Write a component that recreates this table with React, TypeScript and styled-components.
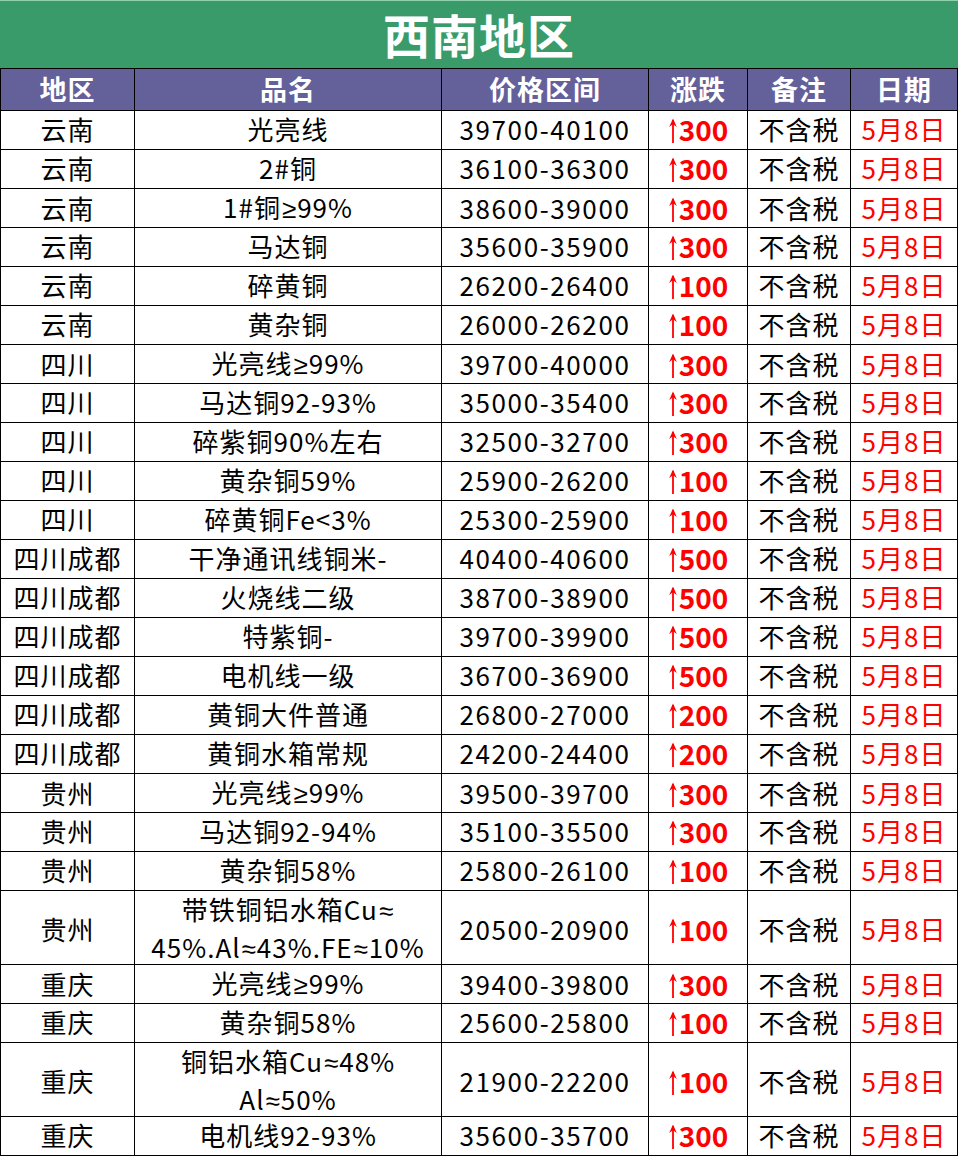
import React from "react";
import styled, { createGlobalStyle } from "styled-components";

const Global = createGlobalStyle`
  html, body { margin: 0; padding: 0; background: #ffffff; }
  body { font-family: "Noto Sans CJK SC", "Noto Sans", sans-serif; }
`;

const COLS = "135px 307px 207px 99px 103px 107px";

const Sheet = styled.div`
  width: 958px;
  display: flex;
  flex-direction: column;
`;

const Title = styled.div`
  background: #399b69;
  border-top: 1px solid #8fd0ad;
  box-sizing: border-box;
  border-bottom: 1px solid #000;
  height: 69px;
  padding-bottom: 2px;
  display: flex;
  align-items: center;
  justify-content: center;
  color: #ffffff;
  font-weight: 700;
  font-size: 47px;
  letter-spacing: 1px;
`;

const Row = styled.div<{ $h: number }>`
  display: grid;
  grid-template-columns: ${COLS};
  height: ${(p) => p.$h + 1}px;
  box-sizing: border-box;
  border-bottom: 1px solid #000;
`;

const HeadCell = styled.div`
  background: #63609a;
  color: #ffffff;
  font-weight: 700;
  font-size: 27px;
  letter-spacing: 1px;
  padding-bottom: 2px;
  display: flex;
  align-items: center;
  justify-content: center;
  border-right: 1px solid #000;
  box-sizing: border-box;
  &:first-child { border-left: 1px solid #000; }
`;

const Cell = styled.div<{ $color?: string; $spacing?: number }>`
  color: ${(p) => p.$color || "#000"};
  font-size: 26px;
  line-height: 36px;
  letter-spacing: ${(p) => (p.$spacing ?? 1)}px;
  padding-bottom: 2px;
  display: flex;
  align-items: center;
  justify-content: center;
  text-align: center;
  border-right: 1px solid #000;
  box-sizing: border-box;
  &:first-child { border-left: 1px solid #000; }
`;

const Text = styled.span`
  display: block;
  white-space: pre-line;
`;

const Sym = styled.span`
  font-family: "Liberation Sans", "DejaVu Sans", sans-serif;
  letter-spacing: 0;
  margin: 0 1px;
`;

const Change = styled.span`
  display: inline-flex;
  align-items: center;
  color: #ff0000;
  font-weight: 700;
  font-size: 28px;
  line-height: 1;
  letter-spacing: 0;
`;

const Arrow = styled.svg`
  width: 10px;
  height: 25px;
  margin-right: 1px;
  margin-top: 2px;
`;

const UpArrow = () => (
  <Arrow viewBox="0 0 10 25">
    <path d="M5 2 V25" stroke="#ff0000" strokeWidth="1.8" fill="none" />
    <path d="M5 0.5 L1.2 9 L5 6.2 L8.8 9 Z" fill="#ff0000" />
  </Arrow>
);

const withSymbols = (text: string) =>
  text.split(/([≥≈])/).map((part, i) =>
    part === "≥" || part === "≈" ? <Sym key={i}>{part}</Sym> : <React.Fragment key={i}>{part}</React.Fragment>
  );

type Item = [string, string, string, string, boolean?];

const rows: Item[] = [
  ["云南", "光亮线", "39700-40100", "300"],
  ["云南", "2#铜", "36100-36300", "300"],
  ["云南", "1#铜≥99%", "38600-39000", "300"],
  ["云南", "马达铜", "35600-35900", "300"],
  ["云南", "碎黄铜", "26200-26400", "100"],
  ["云南", "黄杂铜", "26000-26200", "100"],
  ["四川", "光亮线≥99%", "39700-40000", "300"],
  ["四川", "马达铜92-93%", "35000-35400", "300"],
  ["四川", "碎紫铜90%左右", "32500-32700", "300"],
  ["四川", "黄杂铜59%", "25900-26200", "100"],
  ["四川", "碎黄铜Fe<3%", "25300-25900", "100"],
  ["四川成都", "干净通讯线铜米-", "40400-40600", "500"],
  ["四川成都", "火烧线二级", "38700-38900", "500"],
  ["四川成都", "特紫铜-", "39700-39900", "500"],
  ["四川成都", "电机线一级", "36700-36900", "500"],
  ["四川成都", "黄铜大件普通", "26800-27000", "200"],
  ["四川成都", "黄铜水箱常规", "24200-24400", "200"],
  ["贵州", "光亮线≥99%", "39500-39700", "300"],
  ["贵州", "马达铜92-94%", "35100-35500", "300"],
  ["贵州", "黄杂铜58%", "25800-26100", "100"],
  ["贵州", "带铁铜铝水箱Cu≈\n45%.Al≈43%.FE≈10%", "20500-20900", "100", true],
  ["重庆", "光亮线≥99%", "39400-39800", "300"],
  ["重庆", "黄杂铜58%", "25600-25800", "100"],
  ["重庆", "铜铝水箱Cu≈48%\nAl≈50%", "21900-22200", "100", true],
  ["重庆", "电机线92-93%", "35600-35700", "300"],
];

const headers = ["地区", "品名", "价格区间", "涨跌", "备注", "日期"];

export default function App() {
  return (
    <>
      <Global />
      <Sheet>
        <Title>西南地区</Title>
        <Row $h={41}>
          {headers.map((h) => (
            <HeadCell key={h}>{h}</HeadCell>
          ))}
        </Row>
        {rows.map(([region, name, price, change, tall], i) => (
          <Row key={i} $h={tall ? 73 : 38}>
            <Cell>{region}</Cell>
            <Cell>
              <Text>{withSymbols(name)}</Text>
            </Cell>
            <Cell $spacing={1.6}>{price}</Cell>
            <Cell>
              <Change>
                <UpArrow />
                {change}
              </Change>
            </Cell>
            <Cell>不含税</Cell>
            <Cell $color="#ff0000">5月8日</Cell>
          </Row>
        ))}
      </Sheet>
    </>
  );
}
